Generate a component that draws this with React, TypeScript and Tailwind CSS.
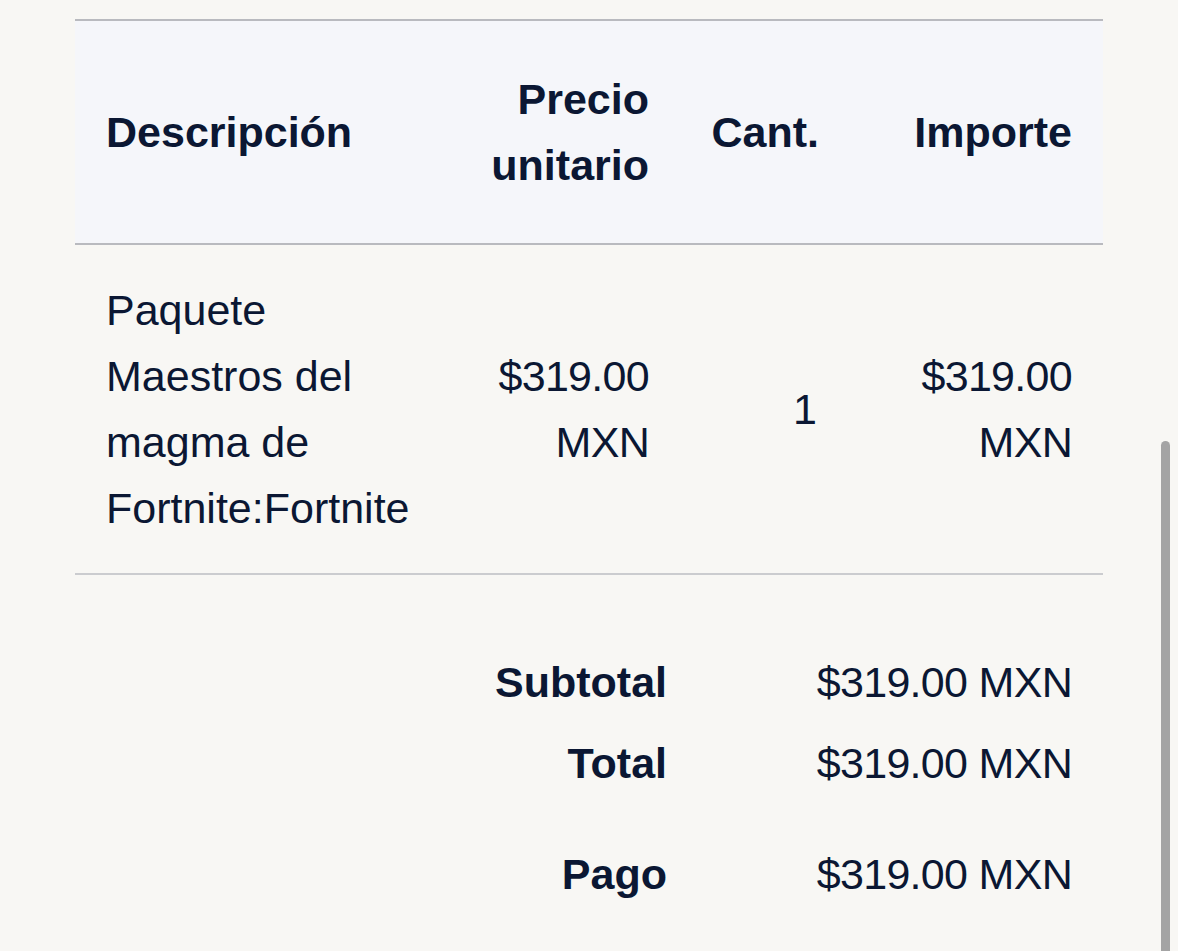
import React from 'react'

const cols = 'grid grid-cols-[370px_235px_170px_253px]'

function Money({ value }: { value: string }) {
  return (
    <div className="flex flex-col items-end tracking-[-0.7px]">
      <span>{value}</span>
      <span>MXN</span>
    </div>
  )
}

function TotalRow({ label, value, extra = '' }: { label: string; value: string; extra?: string }) {
  return (
    <div className={`grid grid-cols-[592px_436px] ${extra}`}>
      <span className="text-right font-bold">{label}</span>
      <span className="pr-[31px] text-right tracking-[-0.7px]">{value}</span>
    </div>
  )
}

export default function App() {
  return (
    <div
      className="relative h-[951px] w-[1178px] overflow-hidden bg-[#f8f7f4] text-[43px] leading-[66px] text-[#0b1733]"
      style={{ fontFamily: '"Liberation Sans", Arial, sans-serif' }}
    >
      <div className="ml-[75px] mt-[19px] w-[1028px]">
        {/* header */}
        <div className={`${cols} items-center border-y-2 border-[#b9babf] bg-[#f5f6fa] py-[45px] font-bold`}>
          <div className="pl-[31px]">Descripción</div>
          <div className="pr-[31px] text-right">
            Precio
            <br />
            unitario
          </div>
          <div className="pr-[31px] text-right">Cant.</div>
          <div className="pr-[31px] text-right">Importe</div>
        </div>

        {/* item */}
        <div className={`${cols} items-center border-b-2 border-[#cbcccf] py-[32px]`}>
          <div className="pl-[31px]">
            Paquete
            <br />
            Maestros del
            <br />
            magma de
            <br />
            Fortnite:Fortnite
          </div>
          <div className="pr-[31px]">
            <Money value="$319.00" />
          </div>
          <div className="pr-[33px] text-right">1</div>
          <div className="pr-[31px]">
            <Money value="$319.00" />
          </div>
        </div>

        {/* totals */}
        <div className="mt-[74px] flex flex-col">
          <TotalRow label="Subtotal" value="$319.00 MXN" />
          <TotalRow label="Total" value="$319.00 MXN" extra="mt-[15px]" />
          <TotalRow label="Pago" value="$319.00 MXN" extra="mt-[45px]" />
        </div>
      </div>

      {/* scrollbar */}
      <div className="absolute left-[1161px] top-[441px] h-[520px] w-[9px] rounded-t-full bg-[#a4a4a4]" />
    </div>
  )
}
